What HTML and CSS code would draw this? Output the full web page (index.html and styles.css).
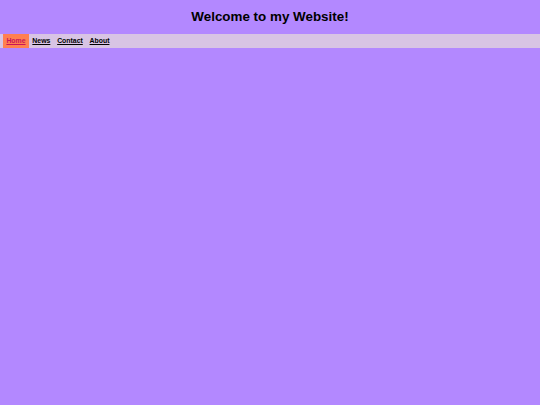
FILE: index.html
```html
<!DOCTYPE html>
<html>
<head>
<meta charset="utf-8">
<title>Welcome</title>
<link rel="stylesheet" href="styles.css">
</head>
<body>
<h1 class="title">Welcome to my Website!</h1>
<nav class="nav">
  <a class="nav-link active" href="#">Home</a>
  <a class="nav-link" href="#">News</a>
  <a class="nav-link" href="#">Contact</a>
  <a class="nav-link" href="#">About</a>
</nav>
</body>
</html>
```
FILE: styles.css
```css
html, body {
  margin: 0;
  padding: 0;
  background: #b388ff;
  font-family: "Liberation Sans", Arial, sans-serif;
}
body {
  min-height: 405px;
}
.title {
  font-size: 13.4px;
  line-height: 16px;
  font-weight: bold;
  text-align: center;
  margin: 9px 0;
  color: #000;
}
.nav {
  display: flex;
  background: #d8c4e4;
  padding: 0 3px;
}
.nav-link {
  display: block;
  padding: 3px 3.4px;
  font-size: 6.9px;
  line-height: 8px;
  font-weight: bold;
  color: #000;
  text-decoration: underline;
}
.nav-link.active {
  background: #ff7f50;
  color: #c8145a;
}
```
